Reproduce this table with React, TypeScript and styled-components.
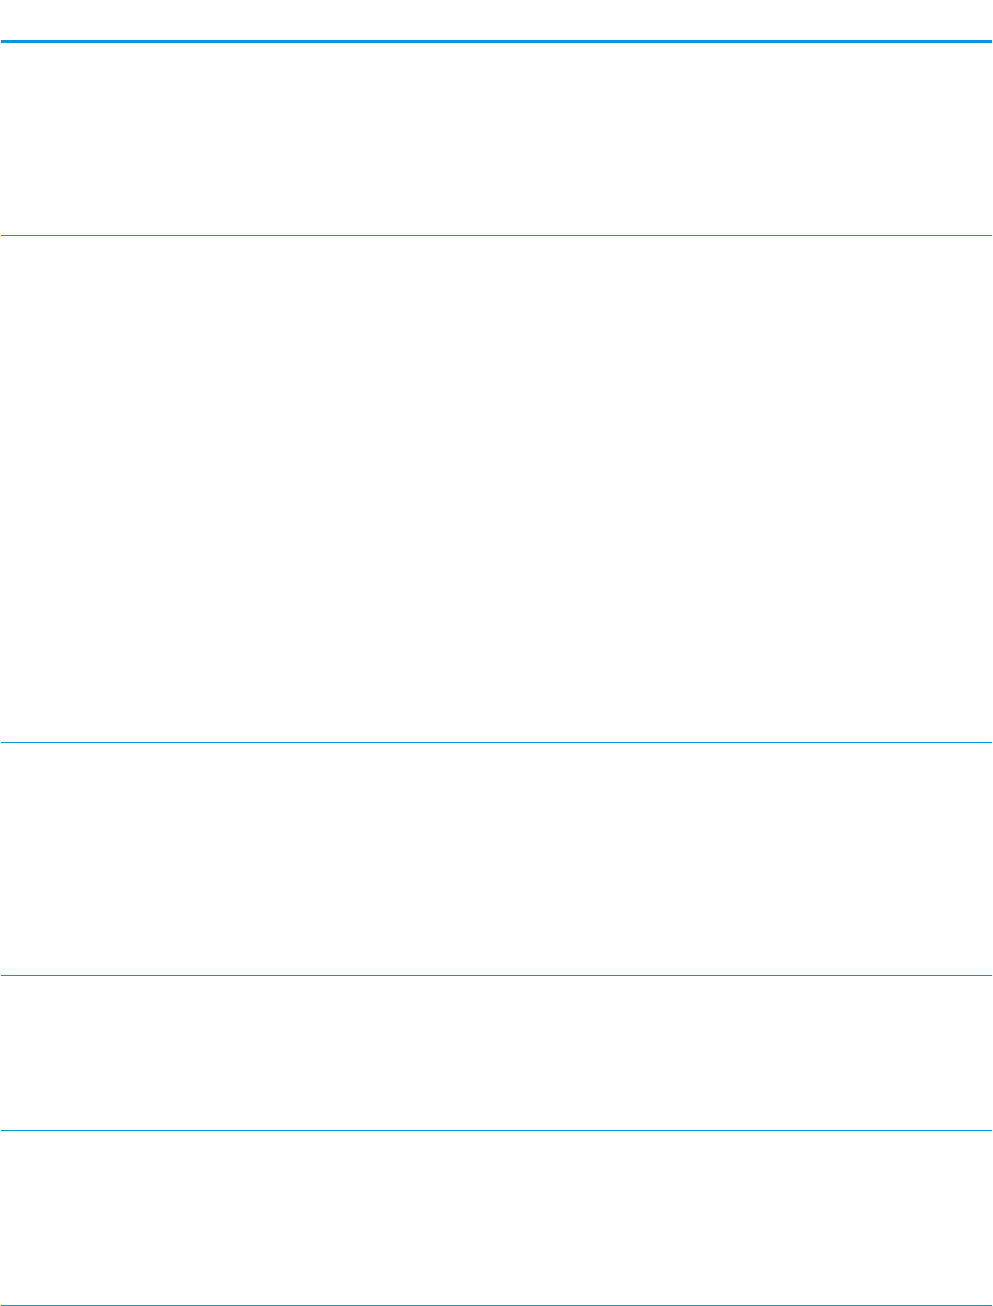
import React from "react";
import styled, { createGlobalStyle } from "styled-components";

const GlobalStyle = createGlobalStyle`
  html, body {
    margin: 0;
    padding: 0;
    background: #ffffff;
    font-family: "Liberation Sans", Arial, sans-serif;
  }
`;

const Page = styled.div`
  display: flex;
  flex-direction: column;
  margin: 0 1px;
  width: 991px;
`;

const Header = styled.header`
  height: 40px;
  border-bottom: 3px solid #0099d8;
`;

const Section = styled.section<{ $h: number }>`
  height: ${(p) => p.$h}px;
  border-bottom: 1px solid #0099d8;
`;

const sections = [192, 506, 232, 154, 174];

export default function App() {
  return (
    <>
      <GlobalStyle />
      <Page>
        <Header />
        {sections.map((h, i) => (
          <Section key={i} $h={h} />
        ))}
      </Page>
    </>
  );
}
